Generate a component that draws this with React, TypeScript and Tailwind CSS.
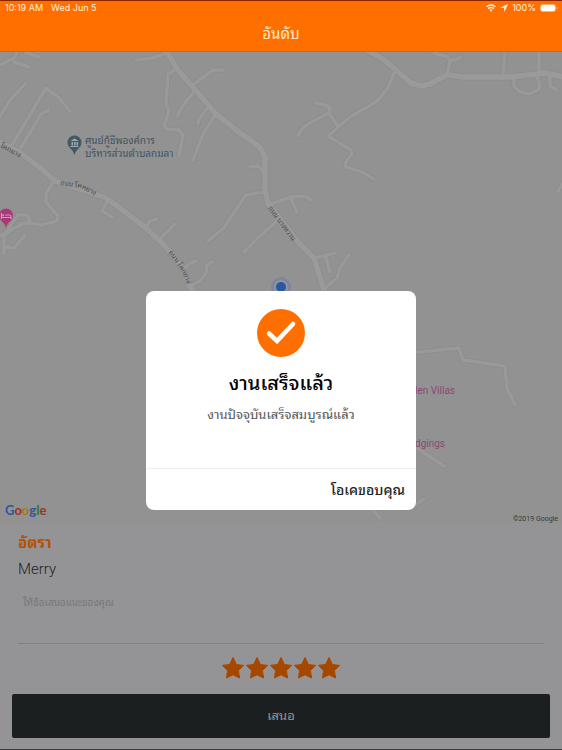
import React from "react";

const thai = "font-['Roboto','Noto_Sans_Thai_Looped','Loma','Garuda','Waree','Tlwg_Typo','Noto_Sans','Liberation_Sans',sans-serif]";

const minorRoads = [
  "M-2 66 L14 58 L18 50 M14 62 L29 67 M25 52 L39 57",
  "M-2 120 L10 100 L26 83 M12 145 L46 88 L58 97 L70 111 M21 148 L41 114 L49 110",
  "M136 60 L153 58 L166 53",
  "M176 69 L168 74 L166 104 L169 111 L164 126 L167 129 L179 130 L183 135 L179 156",
  "M193 85 L213 70 L223 70 M195 91 L184 104 L177 116 M209 106 L199 119 L198 124 M216 114 L204 132 L193 160",
  "M250 167 L258 166 L263 171 M265 192 L246 195 L235 211 L224 228 L208 241",
  "M54 181 L46 194 L46 202 L58 216 L57 221 L42 225 L29 223 L20 224",
  "M-2 237 L6 232 L18 215 L27 215 L30 221 L14 228 L4 236 L4 254 M4 246 L14 248 L25 235",
  "M108 200 L102 211 L112 217 M146 227 L150 221 L157 219 M159 240 L175 224",
  "M184 269 L190 263 L196 261 M190 286 L200 281 L206 273 L207 265 L212 262",
  "M268 205 L291 197 L305 196 L311 200 M291 199 L297 212 M280 218 L259 237 L244 252",
  "M395 71 L388 88 L376 102 L350 117 L328 136 L351 150 L352 154 L345 163 L346 167 L362 172 L374 179",
  "M337 125 L329 113 L330 108 L326 105 L316 103 M329 113 L308 124 L301 130 L298 136",
  "M434 53 L448 57 L450 61 L447 75 M450 60 L456 60 L460 57",
  "M505 51 L503 76 M539 51 L539 74 M514 78 L514 86 L520 92 L529 94 L538 90 L540 85 L537 76 M550 75 L550 86 L557 90",
  "M315 258 L335 253 M326 257 L330 272 M324 289 L337 278 L340 268 L349 255",
  "M558 191 L564 182",
  "M410 353 L459 348 L463 360 L505 366 L507 388 L515 405",
  "M410 443 L418 449 L444 466 M370 505 L410 508 L424 499 M374 511 L380 518",
];

const mainRoads = [
  "M-4 140 L22 154 L38 166 L55 181 L104 197 L120 208 L147 229 L162 243 L180 264 L190 287 L200 300",
  "M166 50 L177 69 L191 85 L216 114 L240 133 L260 147 L265 157 L265 190 L268 203 L281 220 L299 243 L314 258 L324 290",
  "M368 51 L382 58 L396 70 L411 83 L421 86 L430 84 L447 75 L463 77 L512 77 L545 73 L564 77",
];

function MapView() {
  return (
    <svg viewBox="0 52 562 471" preserveAspectRatio="xMidYMid slice" className="absolute inset-0 h-full w-full" role="img" aria-label="แผนที่">
      <g fill="none" strokeLinecap="round" strokeLinejoin="round">
        <path d={minorRoads.join(" ")} stroke="#8c8c8c" strokeWidth="5" />
        <path d={mainRoads.join(" ")} stroke="#8c8c8c" strokeWidth="7" />
        <path d={minorRoads.join(" ")} stroke="#999999" strokeWidth="3.500" />
        <path d={mainRoads.join(" ")} stroke="#9a9a9a" strokeWidth="5.500" />
      </g>
      <defs>
        <path id="road-a" d="M0 147 L24 160" />
        <path id="road-b" d="M60 185 L80 188 L105 200" />
        <path id="road-c" d="M168 253 Q181 266 190 292" />
        <path id="road-d" d="M268 208 L298 249" />
      </defs>
      <g className={thai} fontSize="7" fill="#4c4c4c">
        <text><textPath href="#road-a">โคกยาง</textPath></text>
        <text><textPath href="#road-b">ถนน โคกยาง</textPath></text>
        <text><textPath href="#road-c">ถนน โคกยาง</textPath></text>
        <text><textPath href="#road-d">ถนน บางหวาน</textPath></text>
      </g>
      <g className={thai} fontSize="10" fill="#435460">
        <text x="85" y="144">ศูนย์กู้ชีพองค์การ</text>
        <text x="85" y="157">บริหารส่วนตำบลกมลา</text>
      </g>
      <path d="M74.500 155 C73 149 67.500 148 67.500 142.500 A7 7 0 0 1 81.500 142.500 C81.500 148 76 149 74.500 155Z" fill="#425967" />
      <path d="M70.500 141 L74.500 138.500 L78.500 141Z M70.500 146h8v1h-8Z M71.500 142h1.500v3.500h-1.500Z M74 142h1.500v3.500H74Z M76.500 142H78v3.500h-1.500Z" fill="#a2a9ad" />
      <path d="M6 228 C5 222 -1 221 -1 215.500 A7 7 0 0 1 13 215.500 C13 221 7 222 6 228Z" fill="#a83a76" />
      <path d="M1.500 213v6M1.500 217.500h9.500v1.500M5 215h5q1 0 1 2" fill="none" stroke="#c3a0b3" strokeWidth="1.200" />
      <circle cx="3.200" cy="215.300" r="1" fill="#c3a0b3" />
      <circle cx="281" cy="287" r="10" fill="#7d8799" />
      <circle cx="281" cy="287" r="7" fill="#8f959f" />
      <circle cx="281" cy="287" r="5" fill="#2a56a6" />
      <g className="font-['Roboto',sans-serif]" fontSize="10" fill="#8b4a72">
        <text x="455" y="394" textAnchor="end">Garden Villas</text>
        <text x="445" y="447" textAnchor="end">Lodgings</text>
      </g>
    </svg>
  );
}

function StatusBar() {
  return (
    <div className="flex h-3 items-center justify-between pr-1 pl-[5px] font-['Inter',sans-serif] text-[9px] leading-3 font-normal text-[#fff0d8]">
      <div className="flex gap-2">
        <span>10:19 AM</span>
        <span>Wed Jun 5</span>
      </div>
      <div className="flex items-center gap-1">
        <svg width="10" height="8" viewBox="0 0 10 8" fill="none" stroke="#fff0d8" strokeWidth="1.500" aria-hidden="true">
          <path d="M.5 2.800a6.300 6.300 0 0 1 9 0M2.200 4.800a3.900 3.900 0 0 1 5.600 0" />
          <path d="M3.500 6.100a2.100 2.100 0 0 1 3 0L5 7.800Z" fill="#fff0d8" stroke="none" />
        </svg>
        <svg width="8" height="8" viewBox="0 0 7 7" fill="#fff0d8" aria-hidden="true">
          <path d="M7 0 4 7 3.400 3.600 0 3.200Z" />
        </svg>
        <span>100%</span>
        <svg width="18" height="8" viewBox="0 0 18 8" aria-hidden="true">
          <rect x=".5" y=".5" width="15" height="7" rx="2" fill="none" stroke="#ffb070" />
          <rect x="1" y="1" width="14" height="6" rx="1.500" fill="#fff" />
          <path d="M16.800 2.800q1 1.200 0 2.400" fill="none" stroke="#ffb070" />
        </svg>
      </div>
    </div>
  );
}

function Star() {
  return (
    <svg viewBox="0 0 24 24" className="h-6 w-6" fill="#a64700" stroke="#a64700" strokeWidth="1" strokeLinejoin="round" aria-hidden="true">
      <path d="M12 1.500 15.400 8.500 22.600 9.400 17.400 14.600 18.600 22 12 18.800 5.400 22 6.600 14.600 1.400 9.400 8.600 8.500Z" />
    </svg>
  );
}

export default function App() {
  return (
    <div className={`flex min-h-screen flex-col border-b border-[#3c3c3e] bg-[#949496] ${thai}`}>
      <header className="h-[52px] border-t border-b border-t-[#8a2500] border-b-[#c56a2a] bg-[#ff6f00] pt-px">
        <StatusBar />
        <h1 className="pt-2 text-center text-[15px] leading-6 font-normal text-[#ffe8cc]">อันดับ</h1>
      </header>
      <main className="relative flex flex-1 flex-col">
        <section className="relative flex min-h-80 flex-1 items-end justify-between overflow-hidden bg-[#929292]">
          <MapView />
          <div className="relative pb-1 pl-[5px] font-['Lato',sans-serif] text-[13px] leading-[18px] font-bold" aria-label="Google">
            <span className="text-[#2f569c]">G</span>
            <span className="text-[#a03028]">o</span>
            <span className="text-[#a87b10]">o</span>
            <span className="text-[#2f569c]">g</span>
            <span className="text-[#2a7a42]">l</span>
            <span className="text-[#a03028]">e</span>
          </div>
          <small className="relative pr-1 font-['Roboto',sans-serif] text-[7px] leading-2 text-[#3a3a3a]">©2019 Google</small>
        </section>

        <form className="px-3 pb-[11px]" onSubmit={(e) => e.preventDefault()}>
          <div className="px-1.5 pt-2">
            <h2 className="text-[15px] leading-6 font-bold text-[#b35106]">อัตรา</h2>
            <p className="pt-0.5 text-[15px] leading-6 font-light text-[#222224]">Merry</p>
            <textarea
              aria-label="ให้ข้อเสนอแนะของคุณ"
              placeholder="ให้ข้อเสนอแนะของคุณ"
              className="mt-2 block h-[55px] w-full resize-none border-b border-[#828285] bg-transparent px-[5px] pt-1.5 text-[10px] leading-4 outline-none placeholder:text-[#77777b]"
            />
          </div>
          <div className="flex justify-center py-3" role="group" aria-label="อัตรา">
            {[1, 2, 3, 4, 5].map((n) => (
              <button key={n} type="button" aria-label={`${n} ดาว`}>
                <Star />
              </button>
            ))}
          </div>
          <button type="submit" className="mt-0.5 block h-11 w-full rounded-xs bg-[#1b1f20] text-[13px] text-[#959699]">
            เสนอ
          </button>
        </form>

        <div className="absolute inset-0 flex items-center justify-center">
          <div role="dialog" aria-labelledby="done-title" className="flex w-[270px] flex-col rounded-lg bg-white text-center">
            <div className="flex h-[177px] flex-col items-center px-4 pt-[18px]">
              <svg width="48" height="48" viewBox="0 0 48 48" aria-hidden="true">
                <circle cx="24" cy="24" r="24" fill="#ff6f00" />
                <path d="M12 24.500 20 32 36 15" fill="none" stroke="#fff" strokeWidth="4.500" strokeLinecap="round" />
              </svg>
              <h2 id="done-title" className="pt-3 text-xl leading-7 font-medium text-black">งานเสร็จแล้ว</h2>
              <p className="pt-1.5 text-[13px] leading-6 text-[#555]">งานปัจจุบันเสร็จสมบูรณ์แล้ว</p>
            </div>
            <div className="flex h-[42px] items-center justify-end border-t border-[#eeeeee] px-[11px]">
              <button type="button" className="text-sm font-medium text-[#222]">โอเคขอบคุณ</button>
            </div>
          </div>
        </div>
      </main>
    </div>
  );
}
